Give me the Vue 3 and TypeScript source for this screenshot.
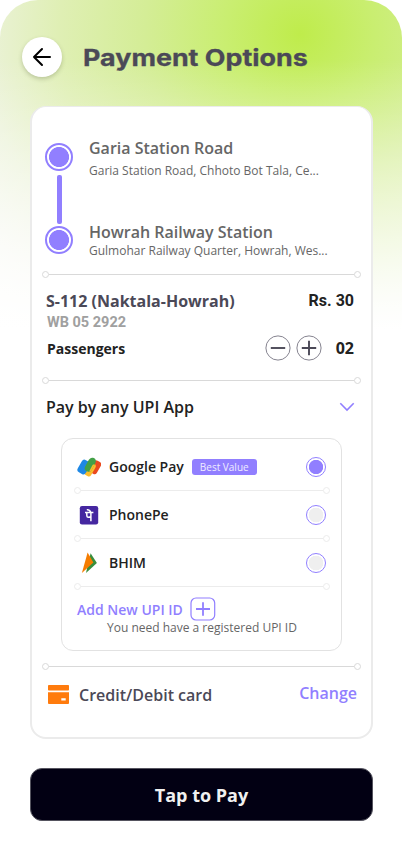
<script setup lang="ts">
import { ref } from 'vue'

interface UpiApp {
  id: string
  name: string
  badge?: string
}

const stops = [
  { title: 'Garia Station Road', detail: 'Garia Station Road, Chhoto Bot Tala, Ce...' },
  { title: 'Howrah Railway Station', detail: 'Gulmohar Railway Quarter, Howrah, Wes...' },
]

const apps: UpiApp[] = [
  { id: 'gpay', name: 'Google Pay', badge: 'Best Value' },
  { id: 'phonepe', name: 'PhonePe' },
  { id: 'bhim', name: 'BHIM' },
]

const selected = ref('gpay')
const passengers = ref(2)
</script>

<template>
  <main class="screen">
    <header class="header">
      <button class="back" aria-label="Back">
        <svg width="20" height="20" viewBox="0 0 20 20" fill="none" stroke="#000" stroke-width="2" stroke-linecap="round" stroke-linejoin="round">
          <path d="M18 10H2M10 2L2 10L10 18" />
        </svg>
      </button>
      <h1 class="title">Payment Options</h1>
    </header>

    <section class="card">
      <div class="route">
        <div class="track">
          <span class="stop-dot"></span>
          <span class="track-line"></span>
          <span class="stop-dot"></span>
        </div>
        <div class="stops">
          <div v-for="stop in stops" :key="stop.title" class="stop">
            <div class="stop-title">{{ stop.title }}</div>
            <div class="stop-detail">{{ stop.detail }}</div>
          </div>
        </div>
      </div>

      <div class="divider"><i></i><b></b><i></i></div>

      <div class="fare">
        <div class="fare-row">
          <span class="bus">S-112 (Naktala-Howrah)</span>
          <span class="price">Rs. 30</span>
        </div>
        <div class="plate">WB 05 2922</div>
        <div class="pass-row">
          <span class="pass-label">Passengers</span>
          <button class="step" aria-label="Remove" @click="passengers = Math.max(1, passengers - 1)">
            <svg width="26" height="26" viewBox="0 0 26 26" fill="none" stroke="#4b4957">
              <circle cx="13" cy="13" r="12.1" stroke-width="0.9" stroke="#777582" />
              <path d="M5.8 13H20.2" stroke-width="1.9" />
            </svg>
          </button>
          <button class="step" aria-label="Add" @click="passengers++">
            <svg width="26" height="26" viewBox="0 0 26 26" fill="none" stroke="#4b4957">
              <circle cx="13" cy="13" r="12.1" stroke-width="0.9" stroke="#777582" />
              <path d="M5.8 13H20.2M13 5.8V20.2" stroke-width="1.9" />
            </svg>
          </button>
          <span class="count">{{ String(passengers).padStart(2, '0') }}</span>
        </div>
      </div>

      <div class="divider"><i></i><b></b><i></i></div>

      <div class="upi-head">
        <span>Pay by any UPI App</span>
        <svg width="16" height="10" viewBox="0 0 16 10" fill="none" stroke="#917fff" stroke-width="1.6">
          <path d="M1.3 1.3L8 8L14.7 1.3" />
        </svg>
      </div>

      <div class="upi-box">
        <template v-for="app in apps" :key="app.id">
          <label class="app" @click="selected = app.id">
            <span class="logo">
              <svg v-if="app.id === 'gpay'" width="24" height="20" viewBox="0 0 24 20">
                <rect x="14.2" y="3.2" width="8.2" height="13.6" rx="2.8" transform="rotate(30 18 10.2)" fill="#ea4a1f" />
                <rect x="9.2" y="5.4" width="7.6" height="14" rx="2.8" transform="rotate(30 13 12.4)" fill="#fbbc2c" />
                <rect x="2.2" y="3" width="9.4" height="14" rx="3" transform="rotate(30 6.8 10)" fill="#1e88e5" />
                <path d="M7.8 10.2L11 4.2C12.3 1.2 14.7 .1 16.8 1.1C18.8 2 19.4 4 18.4 6L15 12.2C14 14.2 12.3 15.4 10.6 14.6C8.3 14.2 7 12.1 7.8 10.2Z" fill="#43a047" />
                <path d="M12.2 14.4L15 9C15.6 8 16.2 7 17.4 8L14.8 12.8C14 14.2 13.2 14.8 12.2 14.4Z" fill="#fbbc2c" />
              </svg>
              <svg v-else-if="app.id === 'phonepe'" width="24" height="20" viewBox="0 0 24 20">
                <rect x="2.8" y="1" width="18.4" height="18.4" rx="2.2" fill="#4527a0" />
                <g fill="none" stroke="#fff" stroke-width="1.5">
                  <path d="M8 7.6H16.4M13.9 7.6V16.2M9.8 7.7V10.3C9.8 12.9 12 12.6 13.7 11.8M9.8 4.7C11.8 4.4 13.1 5.7 13.9 7.5" />
                </g>
              </svg>
              <svg v-else width="24" height="22" viewBox="0 0 24 22">
                <path d="M13.6 1.2L19.9 11L9 21Z" fill="#388e3c" />
                <path d="M10.6 .5L16.4 10.6L4.9 21Z" fill="#f57c00" />
              </svg>
            </span>
            <span class="app-name">{{ app.name }}</span>
            <span v-if="app.badge" class="badge">{{ app.badge }}</span>
            <span class="radio" :class="{ on: selected === app.id }"></span>
          </label>
          <div class="divider light"><i></i><b></b><i></i></div>
        </template>
        <div class="add">
          <span>Add New UPI ID</span>
          <svg width="26" height="24" viewBox="0 0 26 24" fill="none" stroke="#917fff">
            <rect x="1" y="1" width="23.7" height="22" rx="5" stroke-width="1.2" />
            <path d="M6 12H20M13 5.3V18.7" stroke-width="1.8" />
          </svg>
        </div>
        <div class="note">You need have a registered UPI ID</div>
      </div>

      <div class="divider last"><i></i><b></b><i></i></div>

      <div class="card-row">
        <svg width="21" height="19" viewBox="0 0 21 19" fill="#ff7b0d">
          <rect width="21" height="5.6" rx=".8" />
          <path fill-rule="evenodd" d="M0 7.2H21V18A.9 .9 0 0 1 20.1 18.9H.9A.9 .9 0 0 1 0 18ZM13.3 13.3V15.5H17.7V13.3Z" />
        </svg>
        <span class="card-name">Credit/Debit card</span>
        <a class="change">Change</a>
      </div>
    </section>

    <button class="pay">Tap to Pay</button>
  </main>
</template>

<style>
body {
  background: #fff;
}
</style>

<style scoped>
* {
  box-sizing: border-box;
}
button {
  border: 0;
  padding: 0;
  background: none;
  font-family: inherit;
}
svg {
  display: block;
}
.screen {
  width: 402px;
  height: 857px;
  overflow: hidden;
  border-radius: 38px 38px 0 0;
  font-family: 'Open Sans', 'Noto Sans', sans-serif;
  white-space: nowrap;
  background:
    linear-gradient(to bottom, rgba(255, 255, 255, 0) 60px, rgba(255, 255, 255, 0.45) 180px, #fff 330px),
    radial-gradient(370px 360px at 300px 34px, #bfec4b 0%, #c9ee70 20%, #d4ed96 42%, #dfefb4 65%, #ebf2d8 85%, #f3f5ea 100%, #fff 125%);
}
.header {
  display: flex;
  align-items: flex-start;
  height: 106px;
  padding: 37px 22px 0;
}
.back {
  display: grid;
  place-items: center;
  width: 40px;
  height: 40px;
  border-radius: 50%;
  background: #fff;
  box-shadow: 0 2px 4px rgba(60, 70, 30, 0.25);
}
.title {
  margin: 0 0 0 21px;
  font: 700 23px/43px Inter, sans-serif;
  color: #4b4957;
  -webkit-text-stroke: 0.3px #4b4957;
  transform: scaleX(1.168);
  transform-origin: left;
}
.card {
  width: 343px;
  height: 633px;
  margin-left: 30px;
  border: solid #ebebeb;
  border-width: 1px 2px 2px;
  border-radius: 16px;
  background: #fff;
}
.route {
  display: flex;
  height: 164px;
  padding: 36px 0 0 13px;
}
.track {
  display: flex;
  flex-direction: column;
  align-items: center;
  width: 28px;
}
.stop-dot {
  flex: none;
  width: 28px;
  height: 28px;
  border: 2px solid #917fff;
  border-radius: 50%;
  background: radial-gradient(circle, #917fff 9.7px, #fff 10.3px);
}
.track-line {
  width: 5px;
  height: 49px;
  margin: 4px 0 2px;
  border-radius: 2px;
  background: #917fff;
}
.stops {
  margin-left: 16px;
  color: #666;
}
.stop {
  height: 84px;
  margin-top: -7px;
}
.stop + .stop {
  margin-top: 0;
}
.stop-title {
  font-size: 16px;
  font-weight: 600;
  line-height: 24px;
}
.stop-detail {
  margin-top: 1px;
  font-size: 12px;
  line-height: 20px;
}
.stop + .stop .stop-detail {
  margin-top: -3px;
}
.divider {
  display: flex;
  align-items: center;
  height: 7px;
  margin: 0 10px 0 10px;
  --c: #d9d9d9;
}
.divider i {
  width: 7px;
  height: 7px;
  border: 1px solid var(--c);
  border-radius: 50%;
}
.divider b {
  flex: 1;
  height: 1px;
  background: var(--c);
}
.fare {
  height: 99px;
  padding: 12px 17px 0 14px;
}
.fare-row {
  display: flex;
  justify-content: space-between;
  line-height: 22px;
}
.bus {
  font-size: 16px;
  font-weight: 700;
  color: #4b4957;
}
.price {
  font-family: Roboto, sans-serif;
  font-size: 16px;
  font-weight: 700;
  color: #222;
}
.plate {
  padding-left: 1px;
  font: 700 14.5px/21px Roboto, sans-serif;
  color: #a0a0a0;
}
.pass-row {
  display: flex;
  align-items: center;
  height: 30px;
  padding-left: 1px;
}
.pass-label {
  flex: 1;
  font-size: 14px;
  font-weight: 700;
  color: #222;
}
.step + .step {
  margin-left: 5px;
}
.count {
  width: 32px;
  text-align: right;
  font-size: 16px;
  font-weight: 700;
  color: #222;
}
.upi-head {
  display: flex;
  align-items: center;
  justify-content: space-between;
  height: 45px;
  padding: 0 16px 0 14px;
  font-size: 16px;
  font-weight: 600;
  color: #222;
}
.upi-box {
  width: 281px;
  height: 213px;
  margin: 9px 0 0 29px;
  padding: 7px 15px 0 14px;
  border: solid #e2e2e2;
  border-width: 1px;
  border-radius: 12px;
}
.upi-box .divider {
  margin: 0 -4px 0 -2px;
  --c: #ececec;
}
.app {
  display: flex;
  align-items: center;
  height: 41px;
}
.logo {
  width: 24px;
  margin: 0 8px 0 1px;
}
.app-name {
  font-size: 14px;
  font-weight: 600;
  color: #222;
}
.badge {
  height: 16px;
  margin-left: 8px;
  padding: 0 8px;
  border-radius: 3px;
  background: #917fff;
  color: #efecff;
  font-size: 10px;
  line-height: 17px;
}
.radio {
  width: 20px;
  height: 20px;
  margin-left: auto;
  border: 1px solid #917fff;
  border-radius: 50%;
  background: radial-gradient(circle, #efefef 7px, #fff 7.6px);
}
.radio.on {
  background: radial-gradient(circle, #917fff 6.8px, #fff 7.5px);
}
.add {
  display: flex;
  align-items: center;
  gap: 7px;
  height: 24px;
  margin: 7px 0 0 1px;
  font-size: 14px;
  font-weight: 600;
  color: #917fff;
}
.note {
  margin-left: 31px;
  font-size: 12px;
  line-height: 14px;
  color: #666;
}
.divider.last {
  margin-top: 12px;
}
.card-row {
  display: flex;
  align-items: center;
  height: 49px;
  padding: 0 14px 0 16px;
}
.card-name {
  margin-left: 10px;
  font-size: 16px;
  font-weight: 600;
  color: #4b4957;
}
.change {
  margin: -4px 0 0 auto;
  font-size: 16px;
  font-weight: 600;
  color: #917fff;
}
.pay {
  display: block;
  width: 343px;
  height: 53px;
  margin: 29px 0 0 30px;
  padding-top: 1px;
  border: 1px solid #55545f;
  border-radius: 12px;
  background: #020013;
  color: #f0f0f0;
  font-size: 18px;
  font-weight: 700;
}
</style>
